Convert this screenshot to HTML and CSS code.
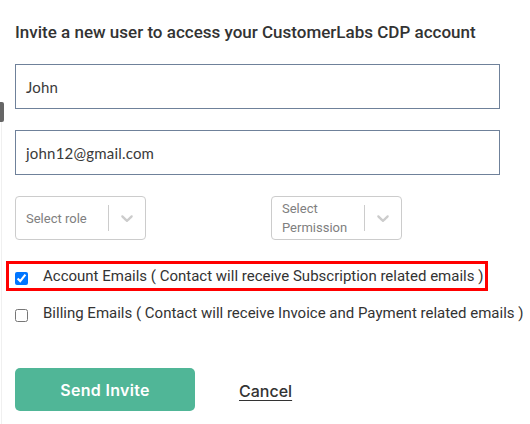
FILE: index.html
```html
<!DOCTYPE html>
<html>
<head>
<meta charset="utf-8">
<link rel="stylesheet" href="styles.css">
</head>
<body>
<div class="edge-handle"></div>
<div class="edge-line"></div>
<form class="invite">
  <h2 class="title">Invite a new user to access your CustomerLabs CDP account</h2>
  <div class="field"><div class="input">John</div></div>
  <div class="field"><div class="input">john12@gmail.com</div></div>
  <div class="selects">
    <div class="select">
      <div class="select-value">Select role</div>
      <span class="select-sep"></span>
      <span class="select-ind">
        <svg viewBox="0 0 20 20" width="20" height="20"><path d="M4.516 7.548c0.436-0.446 1.043-0.481 1.576 0l3.908 3.747 3.908-3.747c0.533-0.481 1.141-0.446 1.574 0 0.436 0.445 0.408 1.197 0 1.615-0.406 0.418-4.695 4.502-4.695 4.502-0.217 0.223-0.502 0.335-0.787 0.335s-0.57-0.112-0.789-0.335c0 0-4.287-4.084-4.695-4.502s-0.436-1.170 0-1.615z"/></svg>
      </span>
    </div>
    <div class="select">
      <div class="select-value">Select Permission</div>
      <span class="select-sep"></span>
      <span class="select-ind">
        <svg viewBox="0 0 20 20" width="20" height="20"><path d="M4.516 7.548c0.436-0.446 1.043-0.481 1.576 0l3.908 3.747 3.908-3.747c0.533-0.481 1.141-0.446 1.574 0 0.436 0.445 0.408 1.197 0 1.615-0.406 0.418-4.695 4.502-4.695 4.502-0.217 0.223-0.502 0.335-0.787 0.335s-0.57-0.112-0.789-0.335c0 0-4.287-4.084-4.695-4.502s-0.436-1.170 0-1.615z"/></svg>
      </span>
    </div>
  </div>
  <label class="check-row highlighted"><input type="checkbox" checked><span>Account Emails ( Contact will receive Subscription related emails )</span></label>
  <label class="check-row"><input type="checkbox"><span>Billing Emails ( Contact will receive Invoice and Payment related emails )</span></label>
  <div class="actions">
    <button type="button" class="btn-send">Send Invite</button>
    <a class="cancel" href="#">Cancel</a>
  </div>
</form>
</body>
</html>
```
FILE: styles.css
```css
html, body {
  margin: 0;
  padding: 0;
  background: #ffffff;
}
body {
  width: 530px;
  height: 424px;
  overflow: hidden;
  position: relative;
  font-family: Roboto, "Liberation Sans", sans-serif;
  color: #333333;
}
.edge-handle {
  position: absolute;
  left: 0;
  top: 102px;
  width: 4px;
  height: 20px;
  background: #666666;
  border-radius: 0 2px 2px 0;
}
.edge-line {
  position: absolute;
  left: 1px;
  top: 122px;
  width: 1px;
  bottom: 0;
  background: #f0f0f0;
}
.invite {
  padding: 0 0 0 15px;
  display: flex;
  flex-direction: column;
}
.title {
  margin: 22px 0 0;
  font-size: 17px;
  font-weight: 500;
  line-height: 20px;
  color: #333333;
}
.field {
  width: 485px;
  margin-top: 22px;
}
.field + .field {
  margin-top: 21px;
}
.input {
  box-sizing: border-box;
  height: 45px;
  border: 1px solid #6f819a;
  padding: 0 10px;
  display: flex;
  align-items: center;
  font-family: Lato, "Open Sans", sans-serif;
  font-size: 15px;
  letter-spacing: 0.2px;
  color: #3a3a3a;
}
.selects {
  margin-top: 21px;
  display: grid;
  grid-template-columns: 256px 131px;
}
.select {
  box-sizing: border-box;
  width: 131px;
  min-height: 44px;
  border: 1px solid #cccccc;
  border-radius: 4px;
  display: flex;
  align-items: center;
}
.select-value {
  flex: 1;
  padding: 2px 8px 2px 10px;
  font-size: 13px;
  line-height: 19px;
  color: #808080;
}
.select-sep {
  align-self: stretch;
  width: 1px;
  margin: 8px 0;
  background: #cccccc;
}
.select-ind {
  display: flex;
  padding: 8px;
}
.select-ind svg {
  fill: #cccccc;
  display: block;
}
.check-row {
  box-sizing: border-box;
  margin-left: -9px;
  padding: 0 6px;
  border: 3px solid transparent;
  height: 30px;
  display: flex;
  align-items: flex-start;
  white-space: nowrap;
  font-size: 15px;
  line-height: 24px;
  color: #333333;
}
.check-row.highlighted {
  margin-top: 21px;
  width: 482px;
  border-color: #ff0000;
}
.check-row + .check-row {
  margin-top: 7px;
}
.check-row input {
  width: 13px;
  height: 13px;
  margin: 8px 15px 0 0;
  flex: none;
}
.actions {
  margin-top: 40px;
  display: flex;
  align-items: center;
}
.btn-send {
  width: 180px;
  height: 43px;
  border: none;
  border-radius: 5px;
  background: #50b697;
  color: #ffffff;
  font-family: Inter, "Open Sans", sans-serif;
  font-size: 16px;
  font-weight: 600;
  letter-spacing: 0.3px;
  padding: 0;
}
.cancel {
  margin-left: 44px;
  margin-top: 3px;
  color: #333333;
  font-family: Inter, "Open Sans", sans-serif;
  font-size: 16px;
  font-weight: 500;
  text-decoration: underline;
  text-underline-offset: 3px;
}
```
